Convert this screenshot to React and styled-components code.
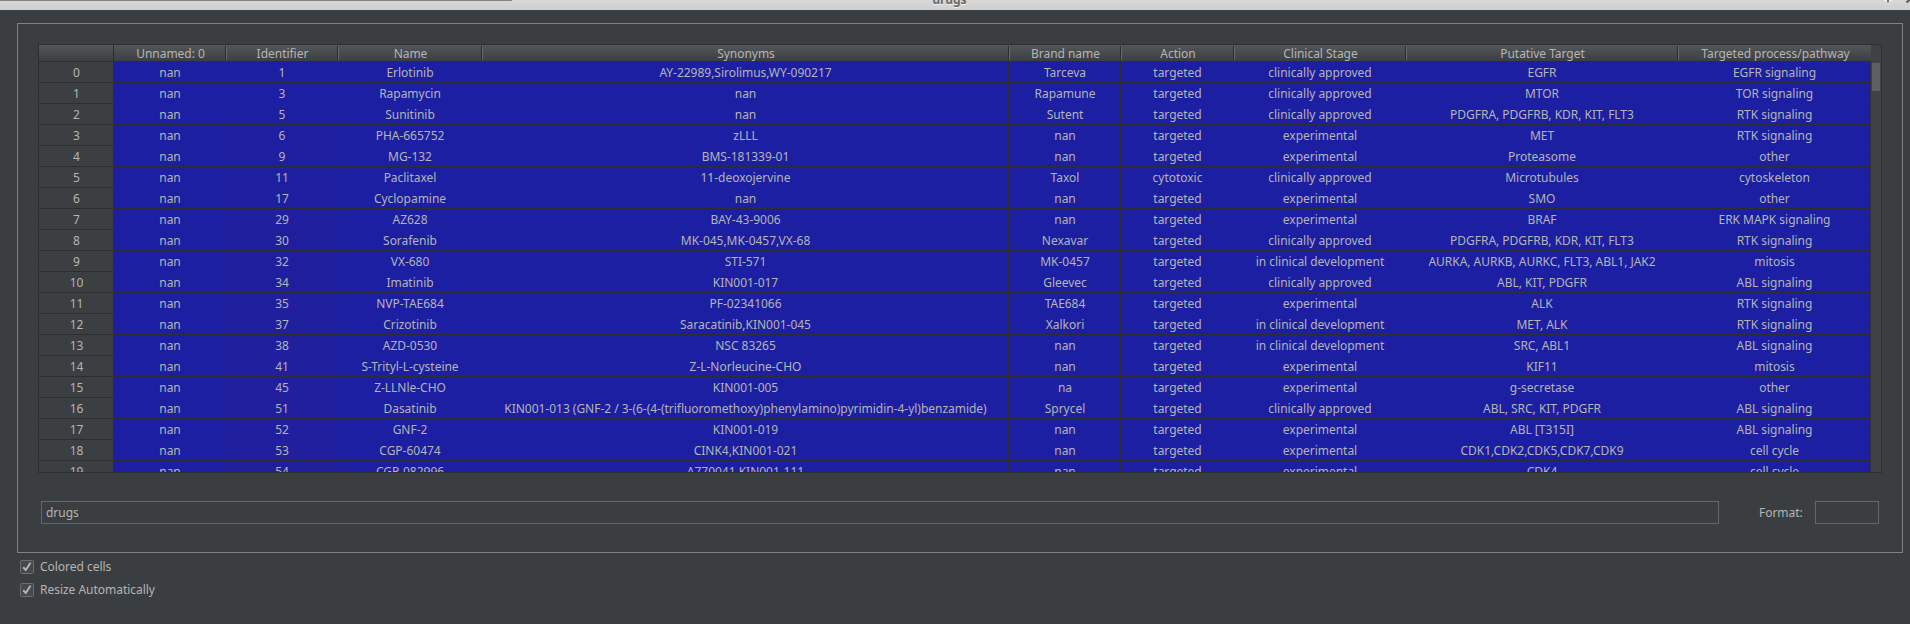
import React from "react";
import styled, { createGlobalStyle } from "styled-components";

const Global = createGlobalStyle`
  * { box-sizing: border-box; }
  body { margin: 0; background: #3b3e40; overflow: hidden; }
`;

const Window = styled.div`
  width: 1910px;
  height: 624px;
  display: flex;
  flex-direction: column;
  overflow: hidden;
  background: #3b3e40;
  color: #b4b5b6;
  font: 12px/20px "Noto Sans", sans-serif;
  letter-spacing: -0.025px;
`;

const TitleBar = styled.header`
  position: relative;
  height: 10px;
  flex: none;
  display: flex;
  justify-content: center;
  overflow: hidden;
  background: linear-gradient(#d8d8d8, #cfcfcf);
`;

const Title = styled.div`
  margin: -10px 11px 0 0;
  height: 20px;
  color: #6a6a6a;
  font-size: 12px;
  font-weight: 700;
  text-shadow: 0 1px 0 #eee;
`;

const TabEdge = styled.div`
  position: absolute;
  left: 0;
  top: 0;
  width: 512px;
  height: 1px;
  background: #858585;
`;

const WindowButtons = styled.svg`
  position: absolute;
  right: 0;
  top: 0;
`;

const GroupBox = styled.section`
  width: 1886px;
  height: 530px;
  flex: none;
  margin: 13px 0 0 17px;
  padding: 20px 20px 0 20px;
  border: 1px solid #808080;
`;

const TableFrame = styled.div`
  display: flex;
  width: 1844px;
  height: 429px;
  border: 1px solid #2e2f30;
  overflow: hidden;
`;

const Grid = styled.div`
  width: 1832px;
  flex: none;
`;

const columns = "75px 112px 112px 144px 527px 112px 113px 172px 272px 193px";

const HeaderRow = styled.div`
  display: grid;
  grid-template-columns: ${columns};
  height: 17px;
  background: linear-gradient(#54575a, #3c3f41);
  border-bottom: 1px solid #2d2e2f;
`;

const HeaderCell = styled.div`
  display: flex;
  justify-content: center;
  height: ${(p) => (p.$corner ? "16px" : "14px")};
  margin-top: ${(p) => (p.$corner ? "0" : "1px")};
  padding-left: 2px;
  line-height: 15px;
  white-space: nowrap;
  border-right: ${(p) => (p.$last ? "0" : "1px solid #2b2c2d")};
  box-shadow: ${(p) => (p.$lit ? "inset 1px 0 0 #66696b" : "none")};
`;

const Row = styled.div`
  display: grid;
  grid-template-columns: ${columns};
  height: 21px;
`;

const Cell = styled.div`
  height: 21px;
  padding-left: 1px;
  line-height: 21px;
  text-align: center;
  white-space: nowrap;
  overflow: hidden;
  background: ${(p) => p.$bg};
  border-right: 1px solid #2d2e30;
  border-bottom: 1px solid #2d2e30;
`;

const ScrollTrack = styled.div`
  flex: 1;
  padding: 18px 1px 0 1px;
  background: #3f4244;
`;

const ScrollThumb = styled.div`
  height: 28px;
  background: #5d5f60;
`;

const FieldRow = styled.div`
  display: flex;
  align-items: center;
  margin: 28px 3px 0 3px;
`;

const Field = styled.div`
  width: ${(p) => p.$w}px;
  height: 23px;
  padding-left: 4px;
  line-height: 21px;
  border: 1px solid #646667;
`;

const FieldLabel = styled.label`
  width: 56px;
  margin-left: 40px;
`;

const Options = styled.div`
  display: flex;
  flex-direction: column;
  gap: 3px;
  padding: 4px 0 0 20px;
`;

const Option = styled.label`
  display: flex;
  align-items: center;
  gap: 6px;
  height: 20px;
`;

const CheckBox = () => (
  <svg width="14" height="14" viewBox="0 0 14 14">
    <rect x="0.5" y="0.5" width="13" height="13" rx="1" fill="#45494a" stroke="#6b6d6e" />
    <path d="M3.2 7.2 L5.8 10 L10.5 2.8" fill="none" stroke="#b5b5b5" strokeWidth="2" />
  </svg>
);

const headers = ["", "Unnamed: 0", "Identifier", "Name", "Synonyms", "Brand name", "Action", "Clinical Stage", "Putative Target", "Targeted process/pathway"];

const A = "clinically approved";
const E = "experimental";
const D = "in clinical development";
const T = "targeted";

const rows = [
  [1, "Erlotinib", "AY-22989,Sirolimus,WY-090217", "Tarceva", T, A, "EGFR", "EGFR signaling"],
  [3, "Rapamycin", "nan", "Rapamune", T, A, "MTOR", "TOR signaling"],
  [5, "Sunitinib", "nan", "Sutent", T, A, "PDGFRA, PDGFRB, KDR, KIT, FLT3", "RTK signaling"],
  [6, "PHA-665752", "zLLL", "nan", T, E, "MET", "RTK signaling"],
  [9, "MG-132", "BMS-181339-01", "nan", T, E, "Proteasome", "other"],
  [11, "Paclitaxel", "11-deoxojervine", "Taxol", "cytotoxic", A, "Microtubules", "cytoskeleton"],
  [17, "Cyclopamine", "nan", "nan", T, E, "SMO", "other"],
  [29, "AZ628", "BAY-43-9006", "nan", T, E, "BRAF", "ERK MAPK signaling"],
  [30, "Sorafenib", "MK-045,MK-0457,VX-68", "Nexavar", T, A, "PDGFRA, PDGFRB, KDR, KIT, FLT3", "RTK signaling"],
  [32, "VX-680", "STI-571", "MK-0457", T, D, "AURKA, AURKB, AURKC, FLT3, ABL1, JAK2", "mitosis"],
  [34, "Imatinib", "KIN001-017", "Gleevec", T, A, "ABL, KIT, PDGFR", "ABL signaling"],
  [35, "NVP-TAE684", "PF-02341066", "TAE684", T, E, "ALK", "RTK signaling"],
  [37, "Crizotinib", "Saracatinib,KIN001-045", "Xalkori", T, D, "MET, ALK", "RTK signaling"],
  [38, "AZD-0530", "NSC 83265", "nan", T, D, "SRC, ABL1", "ABL signaling"],
  [41, "S-Trityl-L-cysteine", "Z-L-Norleucine-CHO", "nan", T, E, "KIF11", "mitosis"],
  [45, "Z-LLNle-CHO", "KIN001-005", "na", T, E, "g-secretase", "other"],
  [51, "Dasatinib", "KIN001-013 (GNF-2 / 3-(6-(4-(trifluoromethoxy)phenylamino)pyrimidin-4-yl)benzamide)", "Sprycel", T, A, "ABL, SRC, KIT, PDGFR", "ABL signaling"],
  [52, "GNF-2", "KIN001-019", "nan", T, E, "ABL [T315I]", "ABL signaling"],
  [53, "CGP-60474", "CINK4,KIN001-021", "nan", T, E, "CDK1,CDK2,CDK5,CDK7,CDK9", "cell cycle"],
  [54, "CGP-082996", "A770041,KIN001-111", "nan", T, E, "CDK4", "cell cycle"],
];

const BLUE = "#1c1fa1";

// Numeric cells shift from blue towards red as the identifier grows.
const heat = (id) => `rgb(${28 + Math.round(id / 10)}, 31, ${161 - Math.round(id / 12)})`;

export default function App() {
  return (
    <Window>
      <Global />
      <TitleBar>
        <TabEdge />
        <Title>drugs</Title>
        <WindowButtons width="26" height="10" viewBox="0 0 26 10">
          <path d="M0 1 H8 M4 2 V4" stroke="#efefef" strokeWidth="1.5" />
          <path d="M4 0 V2.5" stroke="#777" strokeWidth="2" />
          <path d="M22.5 2.5 L26 -0.5" stroke="#555" strokeWidth="2" />
        </WindowButtons>
      </TitleBar>
      <GroupBox>
        <TableFrame>
          <Grid>
            <HeaderRow>
              {headers.map((h, i) => (
                <HeaderCell key={i} $corner={i === 0} $lit={i > 1} $last={i === 9}>{h}</HeaderCell>
              ))}
            </HeaderRow>
            {rows.map((r, i) => (
              <Row key={i}>
                <Cell $bg="#3c3f41">{i}</Cell>
                <Cell $bg={BLUE}>nan</Cell>
                {r.map((v, j) => (
                  <Cell key={j} $bg={j === 0 ? heat(v) : BLUE}>{v}</Cell>
                ))}
              </Row>
            ))}
          </Grid>
          <ScrollTrack><ScrollThumb /></ScrollTrack>
        </TableFrame>
        <FieldRow>
          <Field $w={1678}>drugs</Field>
          <FieldLabel>Format:</FieldLabel>
          <Field $w={64} />
        </FieldRow>
      </GroupBox>
      <Options>
        <Option><CheckBox />Colored cells</Option>
        <Option><CheckBox />Resize Automatically</Option>
      </Options>
    </Window>
  );
}
